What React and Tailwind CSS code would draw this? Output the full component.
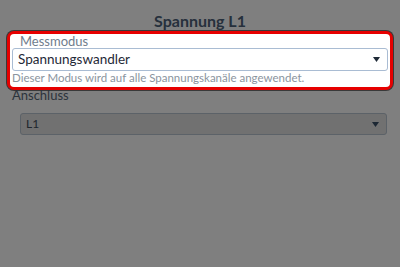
import React from 'react'

const Caret = ({ color = '#1f2a37' }) => (
  <svg width="7" height="5" viewBox="0 0 7 5" className="shrink-0">
    <path d="M0 0 H7 L3.5 5 Z" fill={color} />
  </svg>
)

export default function App() {
  return (
    <div className="w-[400px] h-[267px] bg-[#7f7f7f] font-['Lato',sans-serif] overflow-hidden flex flex-col">
      <h1 className="text-center text-[16px] font-bold leading-[18px] pt-[12px] text-[#26303c]">Spannung L1</h1>

      {/* highlighted field */}
      <div className="mt-[1px] mx-[7px] border-[3px] border-[#e60000] rounded-[7px] bg-white shadow-[0_0_0_1px_rgba(0,0,0,0.55)] pb-[2px] flex flex-col">
        <label className="pl-[10px] text-[13px] leading-[14px] text-[#6f7d8d]">Messmodus</label>
        <div className="mx-[2px] h-[23px] border border-[#a9bcd3] rounded-[3px] bg-white flex items-center justify-between pl-[5px] pr-[7px]">
          <span className="text-[13.5px] text-[#1f2937]">Spannungswandler</span>
          <Caret />
        </div>
        <p className="pl-[2px] text-[11.5px] leading-[14px] text-[#8a949e]">Dieser Modus wird auf alle Spannungskanäle angewendet.</p>
      </div>

      <label className="pl-[12px] text-[13px] leading-[10px] text-[#2c333b]">Anschluss</label>
      <div className="mt-[13px] ml-[20px] mr-[13px] h-[22px] bg-[#717171] border border-[#5c6268] rounded-[3px] flex items-center justify-between pl-[5px] pr-[7px]">
        <span className="text-[12px] text-[#20262d]">L1</span>
        <Caret color="#1c2733" />
      </div>
    </div>
  )
}
